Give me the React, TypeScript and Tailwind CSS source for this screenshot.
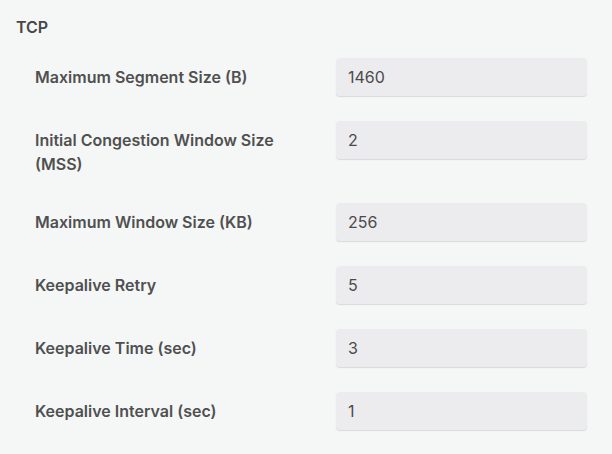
import React from "react";

const rows: { label: string; value: string }[] = [
  { label: "Maximum Segment Size (B)", value: "1460" },
  { label: "Initial Congestion Window Size (MSS)", value: "2" },
  { label: "Maximum Window Size (KB)", value: "256" },
  { label: "Keepalive Retry", value: "5" },
  { label: "Keepalive Time (sec)", value: "3" },
  { label: "Keepalive Interval (sec)", value: "1" },
];

export default function App() {
  return (
    <div
      className="w-[612px] h-[454px] bg-[#f5f7f7] overflow-hidden"
      style={{ fontFamily: "Inter, 'Noto Sans', sans-serif" }}
    >
      <div className="pl-4 pt-[15px] text-[16px] leading-6 font-semibold text-[#474747]">
        TCP
      </div>
      <div className="mt-[19px] flex flex-col gap-[25px] pl-[35px]">
        {rows.map((r) => (
          <div key={r.label} className="flex items-start min-h-[38px]">
            <div className="w-[301px] pr-[30px] pt-[7px] pb-[2px] text-[16px] leading-6 font-semibold text-[#505050]">
              {r.label}
            </div>
            <div className="w-[251px] h-[38px] rounded-[4px] bg-[#ececee] shadow-[0_1px_1px_rgba(0,0,0,0.12)] flex items-center pl-[12px] text-[16px] text-[#4a4a4c]">
              {r.value}
            </div>
          </div>
        ))}
      </div>
    </div>
  );
}
